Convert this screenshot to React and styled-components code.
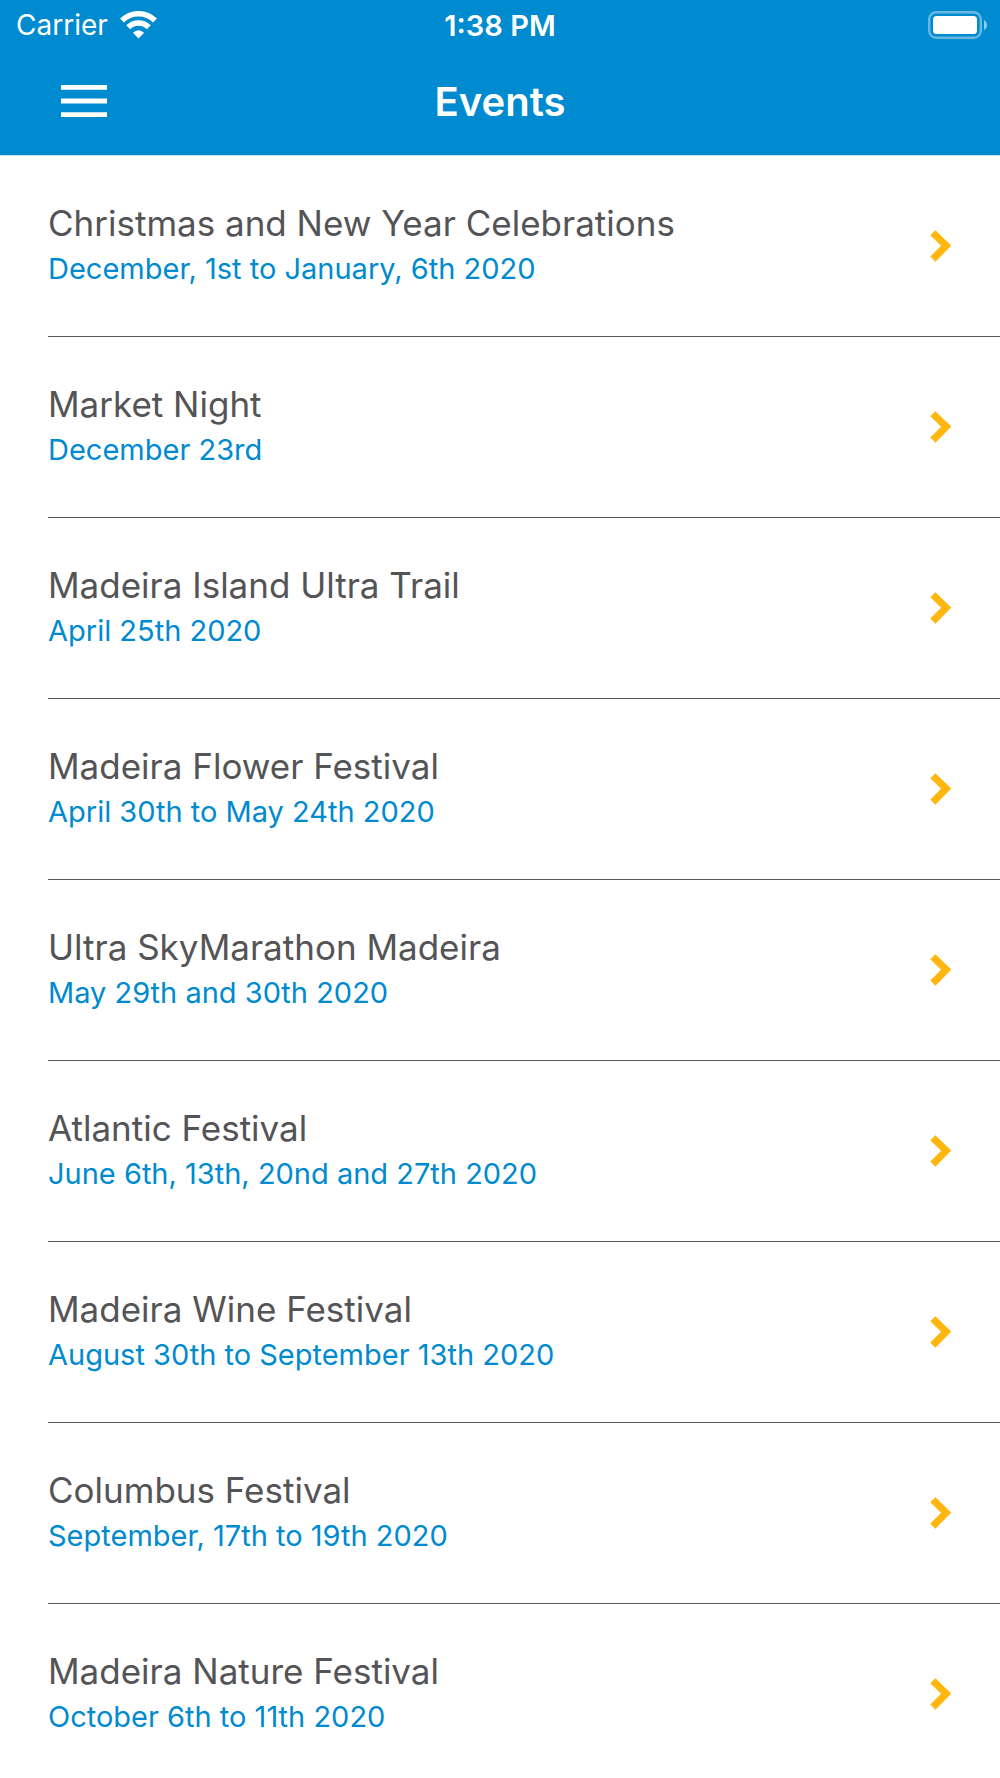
import React from 'react';
import styled, { createGlobalStyle } from 'styled-components';

const GlobalStyle = createGlobalStyle`
  * {
    box-sizing: border-box;
  }
  body {
    margin: 0;
    background-color: #ffffff;
    font-family: Inter, "Liberation Sans", sans-serif;
  }
`;

const Screen = styled.div`
  display: flex;
  flex-direction: column;
  height: 100vh;
`;

const Header = styled.header`
  flex: none;
  background-color: #008acf;
  color: #ffffff;
  border-bottom: 1px solid #c9e2ee;
`;

const StatusBar = styled.div`
  display: grid;
  grid-template-columns: 1fr auto 1fr;
  align-items: center;
  height: 50px;
  padding: 0 12px;
  font-size: 28px;
`;

const Carrier = styled.div`
  display: flex;
  align-items: center;
  gap: 12px;
  padding-left: 4px;
`;

const Time = styled.time`
  font-size: 29px;
  font-weight: 600;
`;

const Battery = styled.svg`
  justify-self: end;
`;

const NavBar = styled.div`
  display: grid;
  grid-template-columns: 1fr auto 1fr;
  align-items: center;
  height: 105px;
  padding: 0 48px 3px;
`;

const MenuButton = styled.button`
  display: flex;
  justify-self: start;
  padding: 12px;
  border: none;
  background: none;
  color: inherit;
  cursor: pointer;
`;

const Title = styled.h1`
  margin: 0;
  font-size: 40px;
  font-weight: 600;
`;

const EventList = styled.ul`
  flex: 1;
  min-height: 0;
  margin: 0;
  padding: 0 0 0 48px;
  list-style: none;
  overflow-y: auto;
  scrollbar-width: none;
`;

const EventRow = styled.li`
  border-bottom: 1px solid #58585a;
`;

const EventLink = styled.a`
  display: flex;
  align-items: center;
  justify-content: space-between;
  padding: 45px 48px 45px 0;
  color: inherit;
  text-decoration: none;
`;

const EventName = styled.div`
  color: #545456;
  font-size: 35px;
  line-height: 45px;
`;

const EventDate = styled.div`
  color: #008acf;
  font-size: 29px;
  line-height: 45px;
`;

const Chevron = styled.svg`
  flex: none;
`;

const events = [
  { name: 'Christmas and New Year Celebrations', date: 'December, 1st to January, 6th 2020' },
  { name: 'Market Night', date: 'December 23rd' },
  { name: 'Madeira Island Ultra Trail', date: 'April 25th 2020' },
  { name: 'Madeira Flower Festival', date: 'April 30th to May 24th 2020' },
  { name: 'Ultra SkyMarathon Madeira', date: 'May 29th and 30th 2020' },
  { name: 'Atlantic Festival', date: 'June 6th, 13th, 20nd and 27th 2020' },
  { name: 'Madeira Wine Festival', date: 'August 30th to September 13th 2020' },
  { name: 'Columbus Festival', date: 'September, 17th to 19th 2020' },
  { name: 'Madeira Nature Festival', date: 'October 6th to 11th 2020' },
];

const WifiIcon = () => (
  <svg width="37" height="28" viewBox="0 0 37 28" aria-hidden="true">
    <g fill="none" stroke="#ffffff" strokeWidth="5.6">
      <path d="M2 9.6 A23.4 23.4 0 0 1 35 9.6" />
      <path d="M8.2 16.3 A14.4 14.4 0 0 1 28.8 16.3" />
    </g>
    <path d="M18.5 27.5 L12.9 21.8 Q18.5 16.6 24.1 21.8 Z" fill="#ffffff" />
  </svg>
);

const BatteryIcon = () => (
  <Battery width="60" height="28" viewBox="0 0 60 28" aria-hidden="true">
    <rect x="1.2" y="1.2" width="51.6" height="25.6" rx="7" fill="none" stroke="#66b9e2" strokeWidth="2.4" />
    <rect x="5" y="5" width="44" height="18" rx="3.5" fill="#ffffff" />
    <path d="M56 9 Q59 10.5 59 14 Q59 17.5 56 19 Z" fill="#8ccaea" />
  </Battery>
);

const MenuIcon = () => (
  <svg width="48" height="32" viewBox="0 0 48 32" aria-hidden="true">
    <path d="M1 2.3H47M1 16H47M1 29.7H47" stroke="#ffffff" strokeWidth="4.8" />
  </svg>
);

const ChevronIcon = () => (
  <Chevron width="22" height="32" viewBox="0 0 22 32" aria-hidden="true">
    <path
      d="M5.4 0.6 L21 15.6 L5.4 31.4 L0.6 26.6 L11.4 15.8 L0.6 5.2 Z"
      fill="#ffb70f"
      stroke="#ffb70f"
      strokeWidth="0.6"
      strokeLinejoin="round"
    />
  </Chevron>
);

const EventItem = ({ name, date }) => (
  <EventRow>
    <EventLink href="#">
      <div>
        <EventName>{name}</EventName>
        <EventDate>{date}</EventDate>
      </div>
      <ChevronIcon />
    </EventLink>
  </EventRow>
);

const App = () => (
  <Screen>
    <GlobalStyle />
    <Header>
      <StatusBar>
        <Carrier>
          Carrier
          <WifiIcon />
        </Carrier>
        <Time>1:38 PM</Time>
        <BatteryIcon />
      </StatusBar>
      <NavBar>
        <MenuButton type="button" aria-label="Menu">
          <MenuIcon />
        </MenuButton>
        <Title>Events</Title>
      </NavBar>
    </Header>
    <EventList>
      {events.map(event => (
        <EventItem key={event.name} {...event} />
      ))}
    </EventList>
  </Screen>
);

export default App;
